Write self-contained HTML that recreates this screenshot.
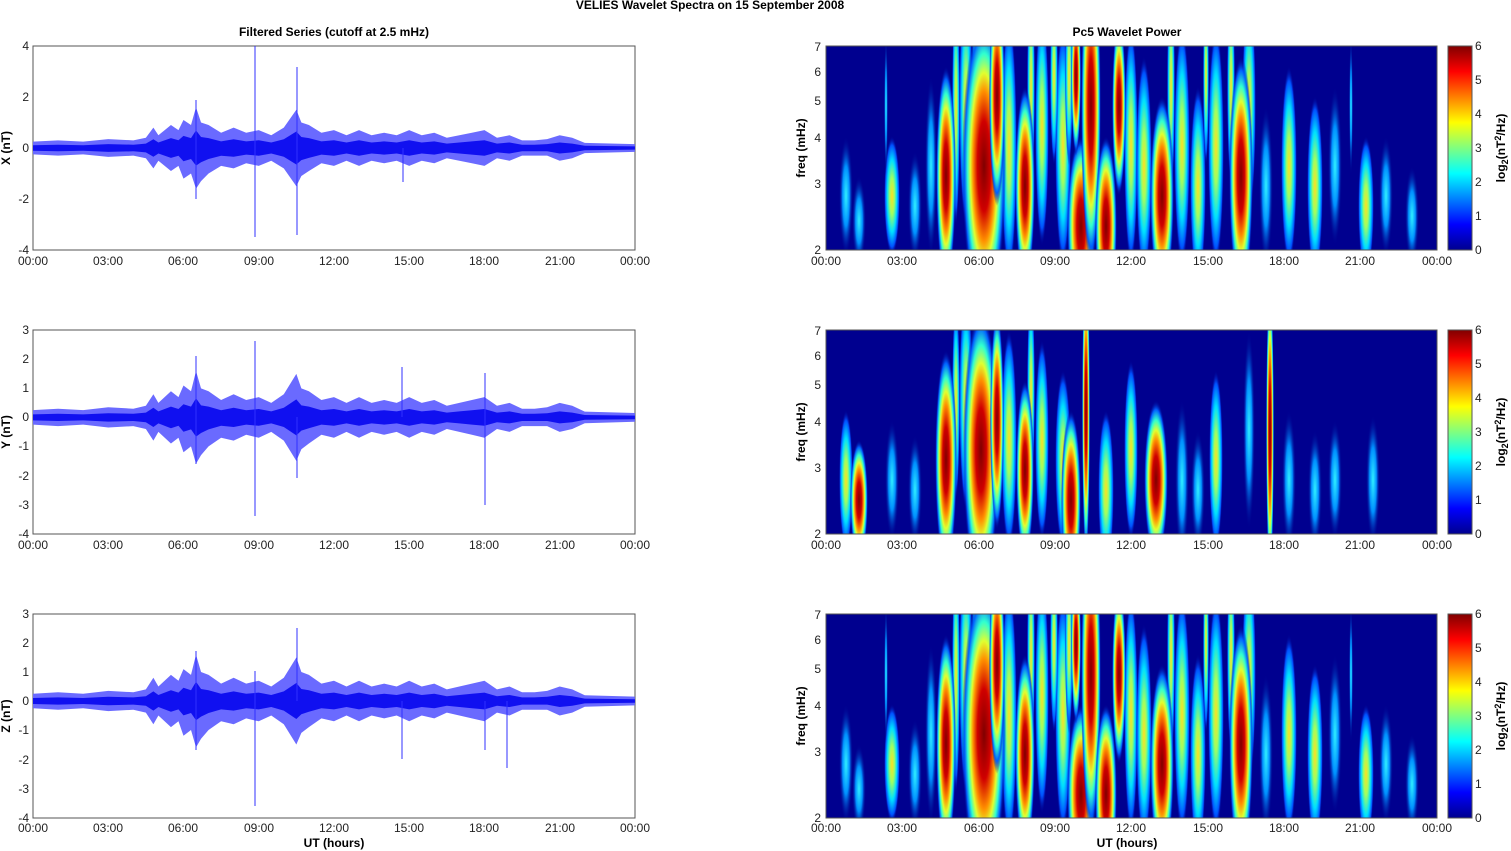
<!DOCTYPE html>
<html><head><meta charset="utf-8"><style>
html,body{margin:0;padding:0;background:#fff;}
svg{display:block;font-family:"Liberation Sans",sans-serif;}
.t{font-size:12px;fill:#222;}
.b{font-size:12px;font-weight:bold;fill:#000;}
</style></head><body>
<svg width="1511" height="851" viewBox="0 0 1511 851" xmlns="http://www.w3.org/2000/svg">
<defs>
<radialGradient id="hot"><stop offset="0" stop-color="#800000"/><stop offset="0.3" stop-color="#d00000"/><stop offset="0.5" stop-color="#ff9000"/><stop offset="0.62" stop-color="#e0ff30"/><stop offset="0.75" stop-color="#30ffd0"/><stop offset="0.88" stop-color="#0060ff"/><stop offset="1" stop-color="#00008f" stop-opacity="0"/></radialGradient>
<radialGradient id="warm"><stop offset="0" stop-color="#ffe020"/><stop offset="0.3" stop-color="#a0ff60"/><stop offset="0.6" stop-color="#00e0ff"/><stop offset="0.85" stop-color="#0050ff"/><stop offset="1" stop-color="#00008f" stop-opacity="0"/></radialGradient>
<radialGradient id="cool"><stop offset="0" stop-color="#30f0ff"/><stop offset="0.5" stop-color="#0090ff"/><stop offset="1" stop-color="#00008f" stop-opacity="0"/></radialGradient>
<linearGradient id="jet" x1="0" y1="1" x2="0" y2="0"><stop offset="0" stop-color="#00008f"/><stop offset="0.125" stop-color="#0000ff"/><stop offset="0.375" stop-color="#00ffff"/><stop offset="0.625" stop-color="#ffff00"/><stop offset="0.875" stop-color="#ff0000"/><stop offset="1" stop-color="#800000"/></linearGradient>
<clipPath id="cp"><rect x="0" y="0" width="611" height="204"/></clipPath>
<path id="env" d="M0,0.25 L1,0.3 2,0.25 3,0.35 4,0.3 4.5,0.4 4.8,0.8 5,0.5 5.5,0.9 5.8,0.7 6,1.1 6.3,0.9 6.5,1.6 6.7,1.0 7,0.9 7.5,0.6 8,0.8 8.5,0.6 9,0.7 9.5,0.5 10,0.8 10.5,1.5 10.7,1.0 11,0.9 11.5,0.6 12,0.7 12.5,0.5 13,0.7 13.5,0.5 14,0.6 14.5,0.5 15,0.7 15.5,0.5 16,0.6 16.5,0.4 17,0.5 17.5,0.6 18,0.7 18.5,0.4 19,0.5 19.5,0.3 20,0.3 20.5,0.35 21,0.5 21.5,0.4 22,0.2 24,0.15 L24,-0.15 22,-0.2 21.5,-0.4 21,-0.5 20.5,-0.3 20,-0.3 19.5,-0.3 19,-0.5 18.5,-0.4 18,-0.7 17.5,-0.6 17,-0.5 16.5,-0.4 16,-0.6 15.5,-0.5 15,-0.7 14.5,-0.5 14,-0.6 13.5,-0.5 13,-0.7 12.5,-0.5 12,-0.7 11.5,-0.6 11,-0.9 10.7,-1.1 10.5,-1.5 10,-0.8 9.5,-0.5 9,-0.7 8.5,-0.6 8,-0.8 7.5,-0.7 7,-1.0 6.7,-1.3 6.5,-1.6 6.3,-1.0 6,-1.2 5.8,-0.7 5.5,-0.9 5,-0.5 4.8,-0.8 4.5,-0.4 4,-0.3 3,-0.35 2,-0.25 1,-0.3 0,-0.25Z"/>
<g id="blobs1">
<rect width="611" height="204" fill="#00008f"/>
<ellipse cx="20" cy="150" rx="7" ry="60" fill="url(#cool)"/>
<ellipse cx="33" cy="175" rx="7" ry="45" fill="url(#cool)"/>
<ellipse cx="66" cy="150" rx="8" ry="60" fill="url(#warm)"/>
<ellipse cx="89" cy="160" rx="7" ry="55" fill="url(#cool)"/>
<ellipse cx="60" cy="60" rx="2" ry="70" fill="url(#cool)"/>
<ellipse cx="105" cy="120" rx="6" ry="90" fill="url(#cool)"/>
<ellipse cx="130" cy="60" rx="4" ry="120" fill="url(#warm)"/>
<ellipse cx="140" cy="60" rx="7" ry="120" fill="url(#warm)"/>
<ellipse cx="150" cy="20" rx="4" ry="90" fill="url(#warm)"/>
<ellipse cx="183" cy="100" rx="8" ry="130" fill="url(#warm)"/>
<ellipse cx="205" cy="40" rx="4" ry="110" fill="url(#warm)"/>
<ellipse cx="216" cy="80" rx="7" ry="120" fill="url(#warm)"/>
<ellipse cx="237" cy="100" rx="8" ry="120" fill="url(#warm)"/>
<ellipse cx="228" cy="30" rx="4" ry="90" fill="url(#warm)"/>
<ellipse cx="243" cy="30" rx="4" ry="90" fill="url(#warm)"/>
<ellipse cx="305" cy="100" rx="7" ry="120" fill="url(#warm)"/>
<ellipse cx="318" cy="120" rx="8" ry="110" fill="url(#warm)"/>
<ellipse cx="345" cy="40" rx="4" ry="110" fill="url(#warm)"/>
<ellipse cx="356" cy="100" rx="8" ry="120" fill="url(#warm)"/>
<ellipse cx="372" cy="140" rx="8" ry="100" fill="url(#warm)"/>
<ellipse cx="380" cy="30" rx="3" ry="90" fill="url(#warm)"/>
<ellipse cx="390" cy="100" rx="8" ry="120" fill="url(#warm)"/>
<ellipse cx="405" cy="40" rx="4" ry="100" fill="url(#warm)"/>
<ellipse cx="423" cy="60" rx="7" ry="110" fill="url(#warm)"/>
<ellipse cx="440" cy="140" rx="7" ry="80" fill="url(#cool)"/>
<ellipse cx="463" cy="120" rx="8" ry="100" fill="url(#warm)"/>
<ellipse cx="489" cy="140" rx="8" ry="90" fill="url(#warm)"/>
<ellipse cx="509" cy="120" rx="7" ry="80" fill="url(#cool)"/>
<ellipse cx="525" cy="60" rx="2" ry="70" fill="url(#cool)"/>
<ellipse cx="540" cy="160" rx="8" ry="70" fill="url(#warm)"/>
<ellipse cx="560" cy="150" rx="7" ry="60" fill="url(#cool)"/>
<ellipse cx="586" cy="170" rx="7" ry="50" fill="url(#cool)"/>
<ellipse cx="120" cy="130" rx="10" ry="110" fill="url(#hot)"/>
<ellipse cx="158" cy="120" rx="22" ry="150" fill="url(#hot)"/>
<ellipse cx="171" cy="50" rx="8" ry="110" fill="url(#hot)"/>
<ellipse cx="199" cy="140" rx="10" ry="100" fill="url(#hot)"/>
<ellipse cx="255" cy="180" rx="14" ry="90" fill="url(#hot)"/>
<ellipse cx="265" cy="60" rx="10" ry="160" fill="url(#hot)"/>
<ellipse cx="280" cy="180" rx="11" ry="90" fill="url(#hot)"/>
<ellipse cx="293" cy="60" rx="7" ry="90" fill="url(#hot)"/>
<ellipse cx="336" cy="150" rx="12" ry="100" fill="url(#hot)"/>
<ellipse cx="415" cy="130" rx="12" ry="120" fill="url(#hot)"/>
<ellipse cx="250" cy="30" rx="5" ry="80" fill="url(#hot)"/>
</g>
</defs>
<text x="710" y="9" text-anchor="middle" class="b">VELIES Wavelet Spectra on 15 September 2008</text>
<text x="334" y="36" text-anchor="middle" class="b">Filtered Series (cutoff at 2.5 mHz)</text>
<text x="1127" y="36" text-anchor="middle" class="b">Pc5 Wavelet Power</text>

<g>
<rect x="33" y="46" width="602" height="204" fill="#fff" stroke="#555"/>
<use href="#env" transform="translate(33,148) scale(25.08,-25.5)" fill="#6a6aff"/>
<use href="#env" transform="translate(33,148) scale(25.08,-11)" fill="#1010f0"/>
<g stroke="#3030ff" stroke-width="1">
<line x1="255" y1="46" x2="255" y2="237"/><line x1="297" y1="67" x2="297" y2="235"/><line x1="196" y1="100" x2="196" y2="199"/><line x1="403" y1="148" x2="403" y2="182"/>
</g>
<rect x="33" y="330" width="602" height="204" fill="#fff" stroke="#555"/>
<use href="#env" transform="translate(33,417.4) scale(25.08,-29)" fill="#6a6aff"/>
<use href="#env" transform="translate(33,417.4) scale(25.08,-12)" fill="#1010f0"/>
<g stroke="#3030ff">
<line x1="255" y1="341" x2="255" y2="516"/><line x1="297" y1="417" x2="297" y2="478"/><line x1="402" y1="367" x2="402" y2="417"/><line x1="485" y1="373" x2="485" y2="505"/><line x1="196" y1="356" x2="196" y2="464"/>
</g>
<rect x="33" y="614" width="602" height="204" fill="#fff" stroke="#555"/>
<use href="#env" transform="translate(33,701) scale(25.08,-29)" fill="#6a6aff"/>
<use href="#env" transform="translate(33,701) scale(25.08,-12)" fill="#1010f0"/>
<g stroke="#3030ff">
<line x1="255" y1="671" x2="255" y2="806"/><line x1="297" y1="628" x2="297" y2="701"/><line x1="402" y1="701" x2="402" y2="759"/><line x1="485" y1="701" x2="485" y2="750"/><line x1="507" y1="701" x2="507" y2="768"/><line x1="196" y1="651" x2="196" y2="750"/>
</g>
</g>
<g class="t" text-anchor="end">
<text x="29" y="50">4</text><text x="29" y="101">2</text><text x="29" y="152">0</text><text x="29" y="203">-2</text><text x="29" y="254">-4</text>
<text x="29" y="334">3</text><text x="29" y="363">2</text><text x="29" y="392">1</text><text x="29" y="421">0</text><text x="29" y="450">-1</text><text x="29" y="480">-2</text><text x="29" y="509">-3</text><text x="29" y="538">-4</text>
<text x="29" y="618">3</text><text x="29" y="647">2</text><text x="29" y="676">1</text><text x="29" y="705">0</text><text x="29" y="734">-1</text><text x="29" y="764">-2</text><text x="29" y="793">-3</text><text x="29" y="822">-4</text>
</g>
<g class="b" text-anchor="middle">
<text transform="translate(10,148) rotate(-90)">X (nT)</text>
<text transform="translate(10,432) rotate(-90)">Y (nT)</text>
<text transform="translate(10,716) rotate(-90)">Z (nT)</text>
<text transform="translate(805,148) rotate(-90)">freq (mHz)</text>
<text transform="translate(805,432) rotate(-90)">freq (mHz)</text>
<text transform="translate(805,716) rotate(-90)">freq (mHz)</text>
<text x="334" y="847">UT (hours)</text>
<text x="1127" y="847">UT (hours)</text>
</g>
<g class="b" font-size="12">
<text transform="translate(1505,148) rotate(-90)" text-anchor="middle">log<tspan font-size="9" dy="3">2</tspan><tspan dy="-3">(nT</tspan><tspan font-size="9" dy="-4">2</tspan><tspan dy="4">/Hz)</tspan></text>
<text transform="translate(1505,432) rotate(-90)" text-anchor="middle">log<tspan font-size="9" dy="3">2</tspan><tspan dy="-3">(nT</tspan><tspan font-size="9" dy="-4">2</tspan><tspan dy="4">/Hz)</tspan></text>
<text transform="translate(1505,716) rotate(-90)" text-anchor="middle">log<tspan font-size="9" dy="3">2</tspan><tspan dy="-3">(nT</tspan><tspan font-size="9" dy="-4">2</tspan><tspan dy="4">/Hz)</tspan></text>
</g>
<g class="t" text-anchor="middle">
<text x="33" y="265">00:00</text><text x="108" y="265">03:00</text><text x="183" y="265">06:00</text><text x="259" y="265">09:00</text><text x="334" y="265">12:00</text><text x="409" y="265">15:00</text><text x="484" y="265">18:00</text><text x="560" y="265">21:00</text><text x="635" y="265">00:00</text>
<text x="33" y="549">00:00</text><text x="108" y="549">03:00</text><text x="183" y="549">06:00</text><text x="259" y="549">09:00</text><text x="334" y="549">12:00</text><text x="409" y="549">15:00</text><text x="484" y="549">18:00</text><text x="560" y="549">21:00</text><text x="635" y="549">00:00</text>
<text x="33" y="832">00:00</text><text x="108" y="832">03:00</text><text x="183" y="832">06:00</text><text x="259" y="832">09:00</text><text x="334" y="832">12:00</text><text x="409" y="832">15:00</text><text x="484" y="832">18:00</text><text x="560" y="832">21:00</text><text x="635" y="832">00:00</text>
<text x="826" y="265">00:00</text><text x="902" y="265">03:00</text><text x="979" y="265">06:00</text><text x="1055" y="265">09:00</text><text x="1131" y="265">12:00</text><text x="1208" y="265">15:00</text><text x="1284" y="265">18:00</text><text x="1360" y="265">21:00</text><text x="1437" y="265">00:00</text>
<text x="826" y="549">00:00</text><text x="902" y="549">03:00</text><text x="979" y="549">06:00</text><text x="1055" y="549">09:00</text><text x="1131" y="549">12:00</text><text x="1208" y="549">15:00</text><text x="1284" y="549">18:00</text><text x="1360" y="549">21:00</text><text x="1437" y="549">00:00</text>
<text x="826" y="832">00:00</text><text x="902" y="832">03:00</text><text x="979" y="832">06:00</text><text x="1055" y="832">09:00</text><text x="1131" y="832">12:00</text><text x="1208" y="832">15:00</text><text x="1284" y="832">18:00</text><text x="1360" y="832">21:00</text><text x="1437" y="832">00:00</text>
</g>
<g transform="translate(826,46)" clip-path="url(#cp)"><use href="#blobs1"/></g>
<g transform="translate(826,330)" clip-path="url(#cp)">
<rect width="611" height="204" fill="#00008f"/>
<ellipse cx="20" cy="150" rx="7" ry="70" fill="url(#warm)"/>
<ellipse cx="33" cy="170" rx="9" ry="60" fill="url(#hot)"/>
<ellipse cx="66" cy="150" rx="7" ry="60" fill="url(#cool)"/>
<ellipse cx="89" cy="160" rx="7" ry="55" fill="url(#cool)"/>
<ellipse cx="130" cy="70" rx="4" ry="100" fill="url(#warm)"/>
<ellipse cx="140" cy="70" rx="7" ry="110" fill="url(#warm)"/>
<ellipse cx="183" cy="110" rx="8" ry="110" fill="url(#warm)"/>
<ellipse cx="205" cy="60" rx="4" ry="100" fill="url(#warm)"/>
<ellipse cx="216" cy="110" rx="7" ry="100" fill="url(#warm)"/>
<ellipse cx="237" cy="130" rx="8" ry="90" fill="url(#warm)"/>
<ellipse cx="280" cy="160" rx="8" ry="80" fill="url(#warm)"/>
<ellipse cx="305" cy="120" rx="7" ry="90" fill="url(#warm)"/>
<ellipse cx="356" cy="150" rx="7" ry="80" fill="url(#cool)"/>
<ellipse cx="372" cy="160" rx="7" ry="60" fill="url(#cool)"/>
<ellipse cx="390" cy="130" rx="7" ry="90" fill="url(#warm)"/>
<ellipse cx="423" cy="100" rx="6" ry="100" fill="url(#cool)"/>
<ellipse cx="463" cy="150" rx="7" ry="70" fill="url(#cool)"/>
<ellipse cx="489" cy="160" rx="7" ry="60" fill="url(#cool)"/>
<ellipse cx="509" cy="150" rx="7" ry="60" fill="url(#cool)"/>
<ellipse cx="547" cy="150" rx="7" ry="65" fill="url(#cool)"/>
<ellipse cx="120" cy="130" rx="11" ry="110" fill="url(#hot)"/>
<ellipse cx="155" cy="120" rx="18" ry="140" fill="url(#hot)"/>
<ellipse cx="171" cy="90" rx="7" ry="110" fill="url(#hot)"/>
<ellipse cx="199" cy="140" rx="9" ry="90" fill="url(#hot)"/>
<ellipse cx="245" cy="170" rx="10" ry="90" fill="url(#hot)"/>
<ellipse cx="260" cy="80" rx="4" ry="150" fill="url(#hot)"/>
<ellipse cx="330" cy="150" rx="12" ry="80" fill="url(#hot)"/>
<ellipse cx="444" cy="100" rx="4" ry="150" fill="url(#hot)"/>
</g>
<g transform="translate(826,614)" clip-path="url(#cp)"><use href="#blobs1"/></g>
<g fill="none" stroke="#555">
<rect x="826" y="46" width="611" height="204"/><rect x="826" y="330" width="611" height="204"/><rect x="826" y="614" width="611" height="204"/>
</g>
<g class="t" text-anchor="end">
<text x="821" y="51">7</text><text x="821" y="76">6</text><text x="821" y="105">5</text><text x="821" y="142">4</text><text x="821" y="188">3</text><text x="821" y="254">2</text>
<text x="821" y="335">7</text><text x="821" y="360">6</text><text x="821" y="389">5</text><text x="821" y="426">4</text><text x="821" y="472">3</text><text x="821" y="538">2</text>
<text x="821" y="619">7</text><text x="821" y="644">6</text><text x="821" y="673">5</text><text x="821" y="710">4</text><text x="821" y="756">3</text><text x="821" y="822">2</text>
</g>
<g stroke="#555">
<rect x="1448" y="46" width="24" height="204" fill="url(#jet)"/>
<rect x="1448" y="330" width="24" height="204" fill="url(#jet)"/>
<rect x="1448" y="614" width="24" height="204" fill="url(#jet)"/>
</g>
<g class="t">
<text x="1475" y="50">6</text><text x="1475" y="84">5</text><text x="1475" y="118">4</text><text x="1475" y="152">3</text><text x="1475" y="186">2</text><text x="1475" y="220">1</text><text x="1475" y="254">0</text>
<text x="1475" y="334">6</text><text x="1475" y="368">5</text><text x="1475" y="402">4</text><text x="1475" y="436">3</text><text x="1475" y="470">2</text><text x="1475" y="504">1</text><text x="1475" y="538">0</text>
<text x="1475" y="618">6</text><text x="1475" y="652">5</text><text x="1475" y="686">4</text><text x="1475" y="720">3</text><text x="1475" y="754">2</text><text x="1475" y="788">1</text><text x="1475" y="822">0</text>
</g>
</svg>
</body></html>
